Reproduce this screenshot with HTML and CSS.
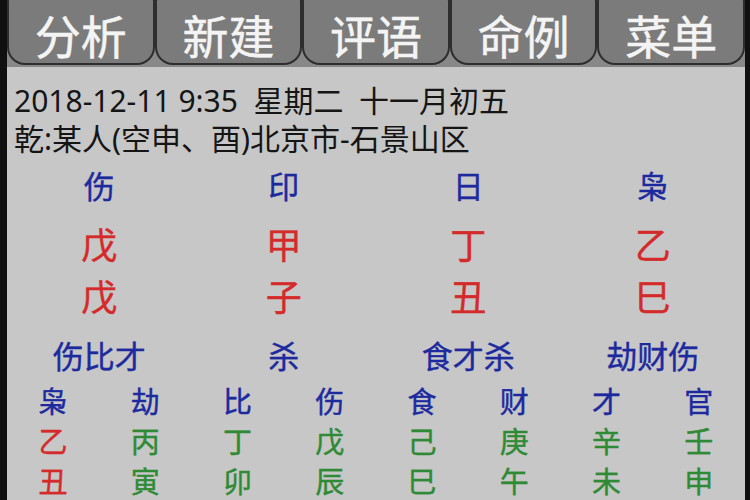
FILE: index.html
```html
<!DOCTYPE html>
<html lang="zh-CN">
<head>
<meta charset="utf-8">
<link rel="stylesheet" href="styles.css">
</head>
<body>
<div class="screen">
  <div class="tabs">
    <div class="tab"><span class="tab-label">分析</span></div>
    <div class="tab"><span class="tab-label">新建</span></div>
    <div class="tab"><span class="tab-label">评语</span></div>
    <div class="tab"><span class="tab-label">命例</span></div>
    <div class="tab"><span class="tab-label">菜单</span></div>
  </div>
  <div class="content">
    <div class="info">
      <div class="line">2018-12-11 9:35  星期二  十一月初五</div>
      <div class="line">乾:某人(空申、酉)北京市-石景山区</div>
    </div>
    <div class="pillars">
      <div class="cell blue god">伤</div>
      <div class="cell blue god">印</div>
      <div class="cell blue god">日</div>
      <div class="cell blue god">枭</div>
      <div class="cell red stem">戊</div>
      <div class="cell red stem">甲</div>
      <div class="cell red stem">丁</div>
      <div class="cell red stem">乙</div>
      <div class="cell red branch">戊</div>
      <div class="cell red branch">子</div>
      <div class="cell red branch">丑</div>
      <div class="cell red branch">巳</div>
      <div class="cell blue hidden">伤比才</div>
      <div class="cell blue hidden">杀</div>
      <div class="cell blue hidden">食才杀</div>
      <div class="cell blue hidden">劫财伤</div>
    </div>
    <div class="luck">
      <div class="cell blue small top">枭</div>
      <div class="cell blue small top">劫</div>
      <div class="cell blue small top">比</div>
      <div class="cell blue small top">伤</div>
      <div class="cell blue small top">食</div>
      <div class="cell blue small top">财</div>
      <div class="cell blue small top">才</div>
      <div class="cell blue small top">官</div>
      <div class="cell red small">乙</div>
      <div class="cell green small">丙</div>
      <div class="cell green small">丁</div>
      <div class="cell green small">戊</div>
      <div class="cell green small">己</div>
      <div class="cell green small">庚</div>
      <div class="cell green small">辛</div>
      <div class="cell green small">壬</div>
      <div class="cell red small">丑</div>
      <div class="cell green small">寅</div>
      <div class="cell green small">卯</div>
      <div class="cell green small">辰</div>
      <div class="cell green small">巳</div>
      <div class="cell green small">午</div>
      <div class="cell green small">未</div>
      <div class="cell green small">申</div>
    </div>
  </div>
</div>
</body>
</html>
```
FILE: styles.css
```css
html, body {
  margin: 0;
  padding: 0;
  background: #101010;
  height: 500px;
  overflow: hidden;
}
body {
  font-family: "Noto Sans", "Noto Sans CJK SC", sans-serif;
}
.screen {
  margin-left: 7px;
  width: 738px;
  height: 500px;
  background: #c7c7c7;
  overflow: hidden;
}
.tabs {
  display: flex;
  height: 67px;
  background: #888888;
  overflow: hidden;
}
.tab {
  position: relative;
  flex: 1;
  box-sizing: border-box;
  height: 65px;
  border: 2px solid #2e2e2e;
  border-top: none;
  border-radius: 0 0 18px 18px;
  background: #7b7b7b;
  display: flex;
  align-items: center;
  justify-content: center;
  padding-top: 5px;
}
.tab::before {
  content: "";
  position: absolute;
  top: -16px;
  left: -2px;
  right: -2px;
  height: 32px;
  border: 2px solid #2e2e2e;
  border-bottom: none;
  border-radius: 18px 18px 0 0;
}
.tab-label {
  display: block;
  color: #f4f4f4;
  font-family: "Noto Sans CJK SC", sans-serif;
  font-size: 46px;
  line-height: 50px;
  -webkit-text-stroke: 0.5px #f4f4f4;
}
.content {
  padding-left: 7px;
}
.info {
  padding-top: 15px;
  color: #151515;
  font-size: 30px;
  line-height: 38px;
}
.line {
  white-space: pre;
}
.pillars {
  margin-left: -7px;
  display: grid;
  grid-template-columns: repeat(4, 1fr);
}
.luck {
  margin-left: -7px;
  display: grid;
  grid-template-columns: repeat(8, 1fr);
}
.cell {
  text-align: center;
  font-family: "Noto Sans CJK SC", sans-serif;
}
.blue { color: #1c2a9e; -webkit-text-stroke: 0.4px #1c2a9e; }
.red { color: #d42a2a; -webkit-text-stroke: 0.4px #d42a2a; }
.green { color: #2f8a35; -webkit-text-stroke: 0.4px #2f8a35; }
.god {
  font-size: 31px;
  line-height: 40px;
  margin-top: 7px;
}
.stem {
  font-size: 36px;
  line-height: 52px;
  margin-top: 12px;
}
.branch {
  font-size: 36px;
  line-height: 52px;
}
.hidden {
  font-size: 31px;
  line-height: 40px;
  margin-top: 14px;
}
.small {
  font-size: 29px;
  line-height: 40px;
}
.top {
  margin-top: 5px;
}
```
